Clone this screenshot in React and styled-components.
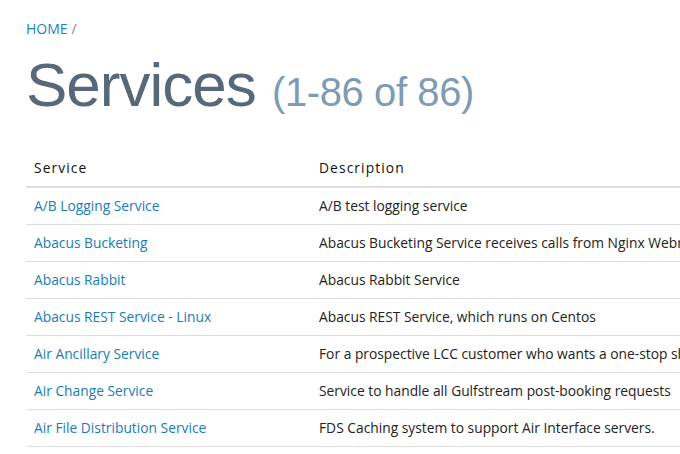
import React from "react";
import styled, { createGlobalStyle } from "styled-components";

const GlobalStyle = createGlobalStyle`
  body {
    margin: 0;
    background: #fff;
    font-family: "Open Sans", "DejaVu Sans", sans-serif;
    overflow: hidden;
  }
`;

const Page = styled.div`
  padding: 19px 0 0 26px;
  width: 760px;
`;

const Breadcrumb = styled.div`
  font-size: 14px;
  line-height: 20px;
  color: #888;
`;

const Crumb = styled.a`
  color: #1a84b8;
  text-decoration: none;
  margin-right: 4px;
`;

const Title = styled.h1`
  margin: 10px 0 0 0;
  font-family: "Liberation Sans", Arial, sans-serif;
  font-weight: normal;
  font-size: 62px;
  line-height: 72px;
  letter-spacing: -1px;
  color: #56687a;
`;

const Count = styled.small`
  font-size: 40px;
  letter-spacing: -0.4px;
  color: #7f9bb1;
`;

const Table = styled.table`
  margin-top: 22px;
  width: 100%;
  border-collapse: collapse;
  font-size: 13.8px;
  line-height: 20px;
  color: #222;
`;

const Head = styled.th`
  text-align: left;
  font-weight: normal;
  letter-spacing: 1.1px;
  color: #111;
  padding: 8px;
  border-bottom: 2px solid #ddd;
  width: ${(p) => p.width || "auto"};
`;

const Cell = styled.td`
  padding: 8px;
  border-bottom: 1px solid #ddd;
  white-space: nowrap;
`;

const ServiceLink = styled.a`
  color: #1a7cb4;
  text-decoration: none;
`;

const services = [
  ["A/B Logging Service", "A/B test logging service"],
  ["Abacus Bucketing", "Abacus Bucketing Service receives calls from Nginx Webrouter"],
  ["Abacus Rabbit", "Abacus Rabbit Service"],
  ["Abacus REST Service - Linux", "Abacus REST Service, which runs on Centos"],
  ["Air Ancillary Service", "For a prospective LCC customer who wants a one-stop shop"],
  ["Air Change Service", "Service to handle all Gulfstream post-booking requests"],
  ["Air File Distribution Service", "FDS Caching system to support Air Interface servers."],
];

export default function App() {
  return (
    <Page>
      <GlobalStyle />
      <Breadcrumb>
        <Crumb href="#">HOME</Crumb>/
      </Breadcrumb>
      <Title>
        Services <Count>(1-86 of 86)</Count>
      </Title>
      <Table>
        <thead>
          <tr>
            <Head width="269px">Service</Head>
            <Head>Description</Head>
          </tr>
        </thead>
        <tbody>
          {services.map(([name, desc]) => (
            <tr key={name}>
              <Cell>
                <ServiceLink href="#">{name}</ServiceLink>
              </Cell>
              <Cell>{desc}</Cell>
            </tr>
          ))}
        </tbody>
      </Table>
    </Page>
  );
}
